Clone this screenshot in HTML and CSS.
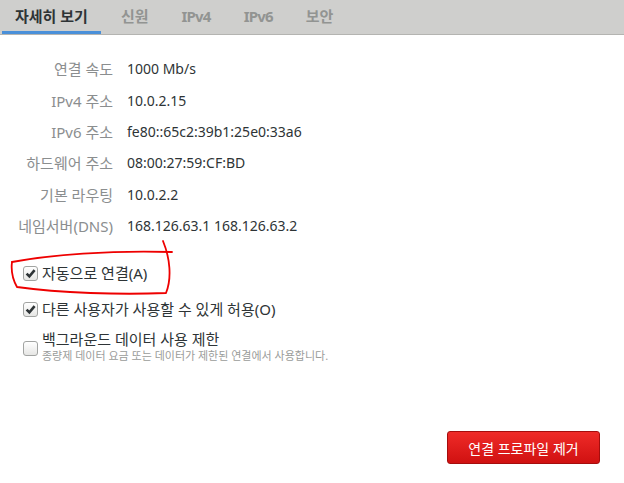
FILE: index.html
```html
<!DOCTYPE html>
<html lang="ko">
<head>
<meta charset="utf-8">
<link rel="stylesheet" href="styles.css">
</head>
<body>
<div class="page">
  <nav class="tabs">
    <div class="tab active">자세히 보기</div>
    <div class="tab">신원</div>
    <div class="tab latin">IPv4</div>
    <div class="tab latin">IPv6</div>
    <div class="tab">보안</div>
  </nav>
  <main class="content">
    <div class="details">
      <div class="label">연결 속도</div><div class="value">1000 Mb/s</div>
      <div class="label">IPv4 주소</div><div class="value">10.0.2.15</div>
      <div class="label">IPv6 주소</div><div class="value">fe80::65c2:39b1:25e0:33a6</div>
      <div class="label">하드웨어 주소</div><div class="value">08:00:27:59:CF:BD</div>
      <div class="label">기본 라우팅</div><div class="value">10.0.2.2</div>
      <div class="label">네임서버(DNS)</div><div class="value">168.126.63.1 168.126.63.2</div>
    </div>
    <div class="checks">
      <div class="check">
        <span class="box checked"><svg viewBox="0 0 15 15" width="15" height="15"><path d="M3.6 7.6 L6.4 10.4 L11.6 4.2" fill="none" stroke="#2e3436" stroke-width="2.6" stroke-linecap="butt" stroke-linejoin="miter"/></svg></span>
        <span class="check-text">자동으로 연결(A)</span>
      </div>
      <div class="check">
        <span class="box checked"><svg viewBox="0 0 15 15" width="15" height="15"><path d="M3.6 7.6 L6.4 10.4 L11.6 4.2" fill="none" stroke="#2e3436" stroke-width="2.6" stroke-linecap="butt" stroke-linejoin="miter"/></svg></span>
        <span class="check-text">다른 사용자가 사용할 수 있게 허용(O)</span>
      </div>
      <div class="check">
        <span class="box"></span>
        <span class="check-body">
          <span class="check-text first">백그라운드 데이터 사용 제한</span>
          <span class="check-sub">종량제 데이터 요금 또는 데이터가 제한된 연결에서 사용합니다.</span>
        </span>
      </div>
    </div>
    <div class="actions">
      <button class="danger">연결 프로파일 제거</button>
    </div>
  </main>
  <svg class="annotation" width="624" height="483" viewBox="0 0 624 483">
    <path d="M12 262 C50 255 110 250 172 252" fill="none" stroke="#ee0000" stroke-width="1.8" stroke-linecap="round"/>
    <path d="M163 241 C170 258 172 278 166 293 C120 295 60 293 17 287 C13 280 11 270 12 262" fill="none" stroke="#ee0000" stroke-width="1.8" stroke-linecap="round"/>
  </svg>
</div>
</body>
</html>
```
FILE: styles.css
```css
html, body {
  margin: 0;
  padding: 0;
  background: #ffffff;
}
body {
  font-family: "Noto Sans", "Noto Sans CJK KR", sans-serif;
  color: #2e3436;
}
.page {
  position: relative;
  width: 624px;
  height: 483px;
  overflow: hidden;
  display: flex;
  flex-direction: column;
}
.tabs {
  display: flex;
  gap: 7px;
  height: 34px;
  padding-left: 2px;
  background: #cfcfcd;
  border-bottom: 1px solid #b4b4b1;
  box-sizing: content-box;
}
.tab {
  padding: 0 13px;
  height: 34px;
  line-height: 32px;
  box-sizing: border-box;
  font-size: 15px;
  font-weight: 700;
  color: #929492;
  border-bottom: 3px solid transparent;
}
.tab.latin {
  letter-spacing: -0.8px;
}
.tab.active {
  color: #2e3436;
  border-bottom-color: #4a90d9;
}
.content {
  flex: 1;
  display: flex;
  flex-direction: column;
}
.details {
  margin-top: 18px;
  display: grid;
  grid-template-columns: 113px auto;
  column-gap: 14px;
  grid-auto-rows: 31.4px;
  align-items: center;
  font-size: 14px;
}
.label {
  text-align: right;
  color: #8b8e8f;
  white-space: nowrap;
  font-size: 15px;
}
.value {
  color: #2e3436;
  white-space: nowrap;
}
.checks {
  margin-top: 20px;
  padding-left: 23px;
  display: flex;
  flex-direction: column;
  gap: 12px;
}
.check {
  display: flex;
  align-items: center;
  gap: 4px;
  min-height: 24px;
}
.box {
  width: 15px;
  height: 15px;
  box-sizing: border-box;
  border: 1px solid #a2a4a2;
  border-radius: 3px;
  background: linear-gradient(#ffffff, #e6e6e4);
  display: flex;
  align-items: center;
  justify-content: center;
  flex: none;
}
.box svg {
  display: block;
  margin: -1px;
}
.check-text {
  font-size: 15px;
  line-height: 18px;
  color: #2e3436;
}
.check-text.first {
  line-height: 17px;
}
.check-body {
  display: flex;
  flex-direction: column;
  margin-top: -2px;
}
.check-sub {
  margin-top: 1px;
  font-size: 11px;
  line-height: 14px;
  color: #9a9c9a;
}
.actions {
  margin-top: auto;
  display: flex;
  justify-content: flex-end;
  padding: 0 24px 19px 0;
}
.danger {
  width: 153px;
  height: 33px;
  border: 1px solid #a50d0d;
  border-radius: 3px;
  background: linear-gradient(#ef2b28, #d01111);
  color: #ffffff;
  font-family: "Noto Sans", "Noto Sans CJK KR", sans-serif;
  font-size: 14px;
  padding: 0;
}
.annotation {
  position: absolute;
  left: 0;
  top: 0;
  pointer-events: none;
}
```
